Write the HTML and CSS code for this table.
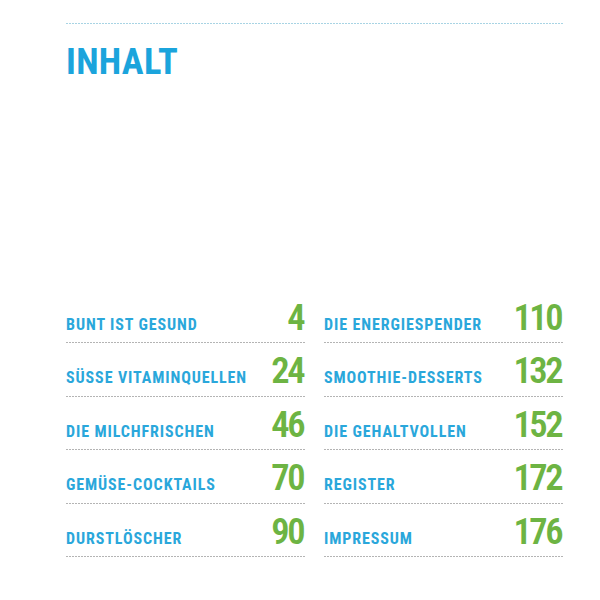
FILE: index.html
```html
<!DOCTYPE html>
<html lang="de">
<head>
<meta charset="utf-8">
<title>Inhalt</title>
<link rel="stylesheet" href="styles.css">
</head>
<body>
<div class="page">
  <div class="topline"></div>
  <h1 class="title">INHALT</h1>
  <div class="toc">
    <div class="col">
      <div class="row"><span class="label">BUNT IST GESUND</span><span class="num">4</span></div>
      <div class="row"><span class="label">SÜSSE VITAMINQUELLEN</span><span class="num">24</span></div>
      <div class="row"><span class="label">DIE MILCHFRISCHEN</span><span class="num">46</span></div>
      <div class="row"><span class="label">GEMÜSE-COCKTAILS</span><span class="num">70</span></div>
      <div class="row"><span class="label">DURSTLÖSCHER</span><span class="num">90</span></div>
    </div>
    <div class="col">
      <div class="row"><span class="label">DIE ENERGIESPENDER</span><span class="num">110</span></div>
      <div class="row"><span class="label">SMOOTHIE-DESSERTS</span><span class="num">132</span></div>
      <div class="row"><span class="label">DIE GEHALTVOLLEN</span><span class="num">152</span></div>
      <div class="row"><span class="label">REGISTER</span><span class="num">172</span></div>
      <div class="row"><span class="label">IMPRESSUM</span><span class="num">176</span></div>
    </div>
  </div>
</div>
</body>
</html>
```
FILE: styles.css
```css
html, body {
  margin: 0;
  padding: 0;
  background: #ffffff;
}
.page {
  width: 600px;
  height: 600px;
  box-sizing: border-box;
  padding: 23px 36px 0 66px;
  font-family: "Roboto", "Liberation Sans", sans-serif;
  font-stretch: 75%;
  font-weight: bold;
}
.topline {
  height: 1px;
  background-image: linear-gradient(to right, #a8d4e4 60%, transparent 60%);
  background-size: 3px 1px;
  background-repeat: repeat-x;
}
.title {
  margin: 20px 0 0 0;
  font-size: 36.5px;
  line-height: 36px;
  font-weight: bold;
  font-stretch: 75%;
  color: #1ba4dc;
  letter-spacing: 0.3px;
}
.toc {
  margin-top: 209.5px;
  display: grid;
  grid-template-columns: 240px 240px;
  column-gap: 18px;
}
.row {
  height: 53.5px;
  box-sizing: border-box;
  padding-top: 10px;
  display: flex;
  align-items: baseline;
  justify-content: space-between;
  background-image: linear-gradient(to right, #b4b4b4 60%, transparent 60%);
  background-size: 3px 1px;
  background-repeat: repeat-x;
  background-position: left bottom;
  padding-bottom: 1px;
}
.label {
  font-size: 16px;
  color: #2aa7db;
  letter-spacing: 0.9px;
  white-space: nowrap;
}
.num {
  font-size: 36.5px;
  line-height: 36px;
  font-weight: 600;
  color: #6db443;
  letter-spacing: -2.5px;
  margin-right: 3px;
  white-space: nowrap;
}
```
